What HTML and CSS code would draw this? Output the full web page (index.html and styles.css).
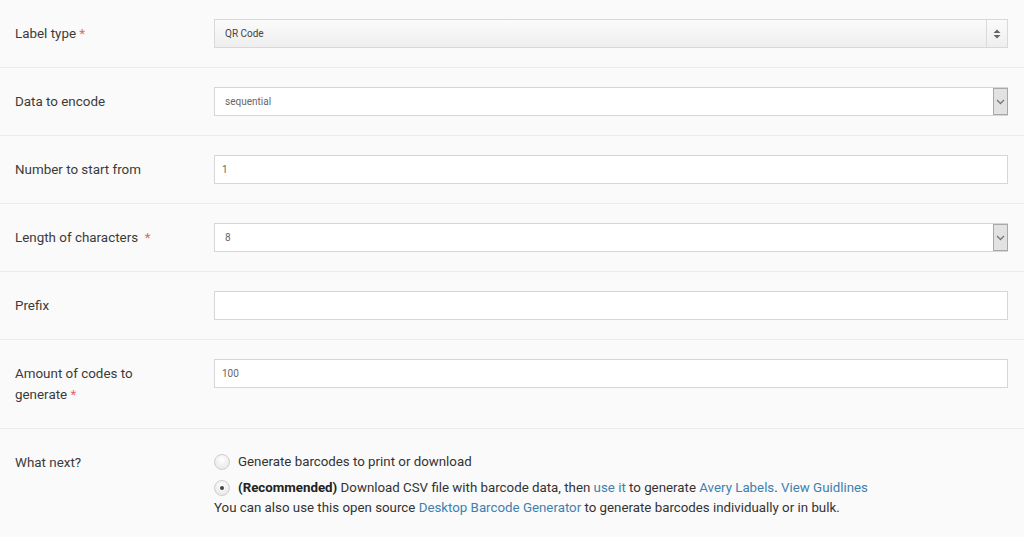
FILE: index.html
```html
<!DOCTYPE html>
<html lang="en">
<head>
    <meta charset="UTF-8">
    <meta name="viewport" content="width=device-width, initial-scale=1.0">
    <title>Barcode Generator</title>
    <link rel="stylesheet" href="styles.css">
</head>
<body>

    <form class="barcode-form">

        <div class="form-row">
            <label class="field-label">Label type <span class="req">*</span></label>
            <div class="field">
                <div class="select-box select-spin">
                    <span class="select-value">QR Code</span>
                    <span class="spin-btn">
                        <svg width="8" height="12" viewBox="0 0 8 12"><path d="M0.5 5 L4 1.5 L7.5 5 Z M0.5 7 L4 10.5 L7.5 7 Z" fill="#666"/></svg>
                    </span>
                </div>
            </div>
        </div>

        <div class="form-row">
            <label class="field-label">Data to encode</label>
            <div class="field">
                <div class="select-box">
                    <span class="select-value">sequential</span>
                    <span class="drop-btn">
                        <svg width="9" height="6" viewBox="0 0 9 6"><path d="M1 1 L4.5 4.5 L8 1" fill="none" stroke="#777" stroke-width="1.3"/></svg>
                    </span>
                </div>
            </div>
        </div>

        <div class="form-row">
            <label class="field-label">Number to start from</label>
            <div class="field">
                <input class="text-input" type="text" value="1">
            </div>
        </div>

        <div class="form-row">
            <label class="field-label">Length of characters &nbsp;<span class="req">*</span></label>
            <div class="field">
                <div class="select-box">
                    <span class="select-value">8</span>
                    <span class="drop-btn">
                        <svg width="9" height="6" viewBox="0 0 9 6"><path d="M1 1 L4.5 4.5 L8 1" fill="none" stroke="#777" stroke-width="1.3"/></svg>
                    </span>
                </div>
            </div>
        </div>

        <div class="form-row">
            <label class="field-label">Prefix</label>
            <div class="field">
                <input class="text-input" type="text" value="">
            </div>
        </div>

        <div class="form-row">
            <label class="field-label">Amount of codes to generate <span class="req">*</span></label>
            <div class="field">
                <input class="text-input" type="text" value="100">
            </div>
        </div>

        <div class="form-row last-row">
            <label class="field-label">What next?</label>
            <div class="field choices">
                <div class="choice">
                    <span class="radio"></span>
                    <span>Generate barcodes to print or download</span>
                </div>
                <div class="choice">
                    <span class="radio checked"></span>
                    <span><b>(Recommended)</b> Download CSV file with barcode data, then <a href="#">use it</a> to generate <a href="#">Avery Labels</a>. <a href="#">View Guidlines</a></span>
                </div>
                <p class="note">You can also use this open source <a href="#">Desktop Barcode Generator</a> to generate barcodes individually or in bulk.</p>
            </div>
        </div>

    </form>

</body>
</html>
```

FILE: styles.css
```css
body {
    font-family: 'Roboto', 'Liberation Sans', sans-serif;
    background-color: #fafafa;
    color: #333;
    margin: 0;
    padding: 0;
}

.barcode-form {
    width: 100%;
}

.form-row {
    display: grid;
    grid-template-columns: 199px 1fr;
    padding: 19px 16px 19px 15px;
    border-bottom: 1px solid #eaeaea;
}

.last-row {
    border-bottom: none;
}

.field-label {
    font-size: 13.4px;
    line-height: 21px;
    padding: 4px 0 4px;
    width: 150px;
    color: #3a3a3a;
}

.req {
    color: #e0666b;
}

.field {
    min-width: 0;
}

/* Inputs and fake selects */
.text-input,
.select-box {
    box-sizing: border-box;
    width: 100%;
    height: 29px;
    border: 1px solid #d6d6d6;
    background-color: #fff;
    font-family: inherit;
    font-size: 10px;
    color: #666;
    padding: 0 0 0 7px;
    margin: 0;
    outline: none;
}

.select-box {
    display: flex;
    align-items: center;
    padding-left: 10px;
}

.select-value {
    flex: 1;
}

.select-spin {
    background: linear-gradient(#fbfbfb, #eeeeee);
    color: #444;
    border-color: #d9d9d9;
}

.spin-btn {
    width: 20px;
    height: 100%;
    border-left: 1px solid #dadada;
    display: flex;
    align-items: center;
    justify-content: center;
}

.drop-btn {
    width: 15px;
    height: 27px;
    margin-right: -1px;
    background-color: #e2e2e2;
    border: 1px solid #a8a8a8;
    box-sizing: border-box;
    display: flex;
    align-items: center;
    justify-content: center;
}

/* What next block */
.choices {
    font-size: 13.3px;
    color: #333;
    padding-top: 4px;
}

.choice {
    display: flex;
    align-items: center;
    line-height: 20px;
    margin-bottom: 6px;
}

.choice b {
    color: #222;
}

.radio {
    width: 14px;
    height: 14px;
    border-radius: 50%;
    border: 1px solid #cfcfcf;
    background: radial-gradient(circle at 50% 35%, #ffffff, #e2e2e2);
    margin-right: 8px;
    position: relative;
    flex-shrink: 0;
}

.radio.checked::after {
    content: "";
    position: absolute;
    left: 5px;
    top: 5px;
    width: 4px;
    height: 4px;
    border-radius: 50%;
    background-color: #444;
}

.note {
    margin: -6px 0 0;
    line-height: 20px;
}

a {
    color: #3d80b0;
    text-decoration: none;
}
```
